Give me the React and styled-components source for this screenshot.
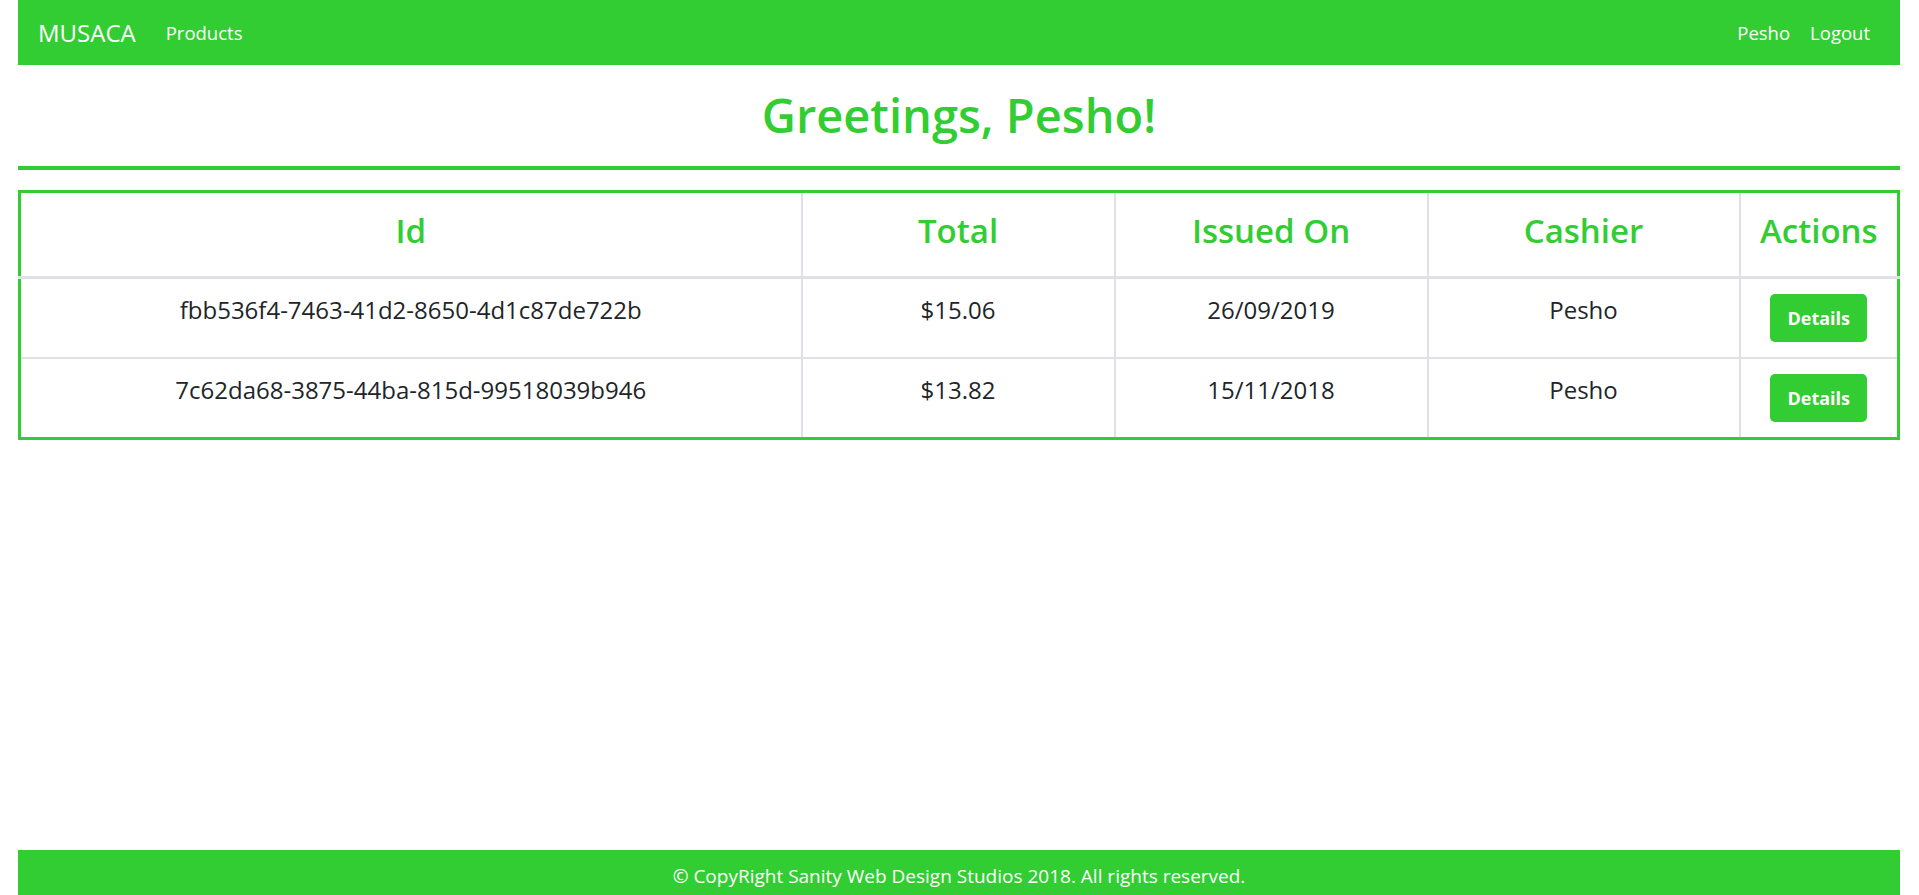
import React from "react";
import styled, { createGlobalStyle } from "styled-components";

const GREEN = "#32cd32";

const GlobalStyle = createGlobalStyle`
  html, body {
    margin: 0;
    padding: 0;
    background: #fff;
  }
  body {
    font-family: "Open Sans", "Noto Sans", Arial, sans-serif;
    color: #212529;
  }
`;

const Page = styled.div`
  min-height: 100vh;
  display: flex;
  flex-direction: column;
  padding: 0 19px 0 18px;
  box-sizing: border-box;
`;

const Navbar = styled.nav`
  height: 65px;
  background-color: ${GREEN};
  display: flex;
  align-items: center;
  padding: 0 20px;
`;

const Brand = styled.a`
  color: #fff;
  font-size: 24px;
  margin-right: 20px;
  text-decoration: none;
`;

const NavGroup = styled.div`
  display: flex;
  align-items: center;
  margin-left: ${(p) => (p.right ? "auto" : "0")};
`;

const NavLink = styled.a`
  color: #fff;
  font-size: 18.5px;
  padding: 0 10px;
  text-decoration: none;
`;

const Heading = styled.h1`
  margin: 22px 0 0;
  text-align: center;
  color: ${GREEN};
  font-size: 47px;
  font-weight: 600;
  line-height: 1.2;
`;

const Rule = styled.hr`
  margin: 23px 0 20px;
  border: 0;
  height: 4px;
  background-color: ${GREEN};
`;

const Table = styled.table`
  width: 100%;
  border-collapse: collapse;
  table-layout: fixed;
  border: 3px solid ${GREEN};
`;

const Th = styled.th`
  color: ${GREEN};
  font-size: 33px;
  font-weight: 600;
  line-height: 1.2;
  padding: 18px 10px 25px;
  text-align: center;
  border: 2px solid #dee2e6;
  border-bottom-width: 3px;
  white-space: nowrap;
`;

const Td = styled.td`
  font-size: 24px;
  line-height: 1.3;
  padding: 15px 10px;
  text-align: center;
  vertical-align: top;
  border: 2px solid #dee2e6;
`;

const DetailsButton = styled.button`
  width: 97px;
  height: 48px;
  border: 0;
  border-radius: 5px;
  background-color: ${GREEN};
  color: #fff;
  font-family: inherit;
  font-size: 18px;
  font-weight: 700;
  cursor: pointer;
`;

const Footer = styled.footer`
  margin-top: auto;
  height: 45px;
  background-color: ${GREEN};
  display: flex;
  align-items: center;
  justify-content: center;
  padding-top: 6px;
  box-sizing: border-box;
`;

const FooterText = styled.span`
  color: #fff;
  font-size: 19px;
  white-space: nowrap;
`;

const receipts = [
  { id: "fbb536f4-7463-41d2-8650-4d1c87de722b", total: "$15.06", issuedOn: "26/09/2019", cashier: "Pesho" },
  { id: "7c62da68-3875-44ba-815d-99518039b946", total: "$13.82", issuedOn: "15/11/2018", cashier: "Pesho" },
];

export default function App() {
  return (
    <>
      <GlobalStyle />
      <Page>
        <Navbar>
          <Brand href="#">MUSACA</Brand>
          <NavGroup>
            <NavLink href="#">Products</NavLink>
          </NavGroup>
          <NavGroup right>
            <NavLink href="#">Pesho</NavLink>
            <NavLink href="#">Logout</NavLink>
          </NavGroup>
        </Navbar>

        <Heading>Greetings, Pesho!</Heading>
        <Rule />

        <Table>
          <colgroup>
            <col style={{ width: "782px" }} />
            <col style={{ width: "313px" }} />
            <col style={{ width: "313px" }} />
            <col style={{ width: "312px" }} />
            <col />
          </colgroup>
          <thead>
            <tr>
              <Th>Id</Th>
              <Th>Total</Th>
              <Th>Issued On</Th>
              <Th>Cashier</Th>
              <Th>Actions</Th>
            </tr>
          </thead>
          <tbody>
            {receipts.map((r) => (
              <tr key={r.id}>
                <Td>{r.id}</Td>
                <Td>{r.total}</Td>
                <Td>{r.issuedOn}</Td>
                <Td>{r.cashier}</Td>
                <Td>
                  <DetailsButton>Details</DetailsButton>
                </Td>
              </tr>
            ))}
          </tbody>
        </Table>

        <Footer>
          <FooterText>© CopyRight Sanity Web Design Studios 2018. All rights reserved.</FooterText>
        </Footer>
      </Page>
    </>
  );
}
